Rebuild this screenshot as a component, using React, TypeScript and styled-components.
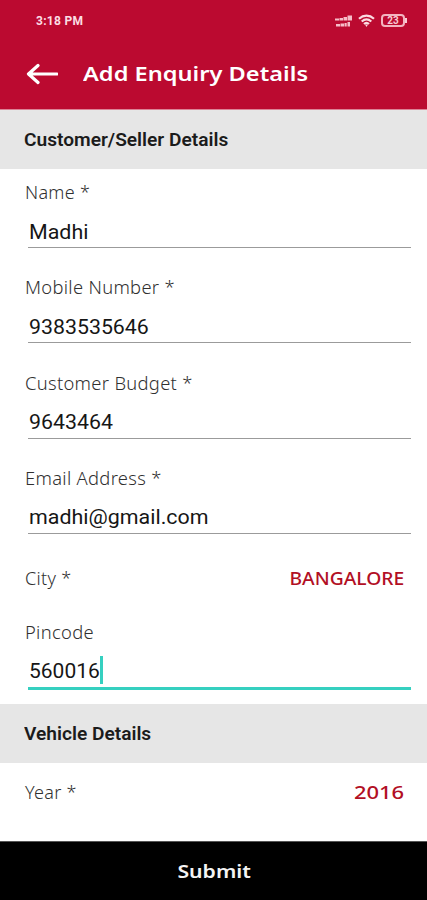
import React from "react";
import styled, { createGlobalStyle } from "styled-components";

const GlobalStyle = createGlobalStyle`
  * { box-sizing: border-box; }
  body { margin: 0; background: #fff; }
`;

const Screen = styled.div`
  width: 100%;
  height: 900px;
  display: flex;
  flex-direction: column;
  overflow: hidden;
  background: #fff;
  color: #202020;
  font-family: Roboto, sans-serif;
`;

const Header = styled.header`
  flex: none;
  height: 110px;
  background: #bb0a30;
  border-bottom: 1px solid #dc8396;
  color: #fff;
`;

const StatusBar = styled.div`
  height: 41px;
  padding: 0 19px 0 36px;
  display: flex;
  align-items: center;
  justify-content: space-between;
`;

const Clock = styled.span`
  font: 700 12px/16px Roboto, sans-serif;
  letter-spacing: 0.3px;
  color: #fbdde3;
`;

const StatusIcons = styled.div`
  display: flex;
  align-items: center;
  gap: 6px;
  svg { display: block; }
`;

const AppBar = styled.div`
  height: 66px;
  padding-left: 26px;
  display: flex;
  align-items: center;
  gap: 25px;
`;

const BackButton = styled.button`
  width: 32px;
  height: 24px;
  padding: 0;
  border: 0;
  background: none;
  color: #fff;
  svg { display: block; }
`;

const Stretch = styled.span<{ $x?: number; $origin?: string }>`
  display: inline-block;
  white-space: nowrap;
  transform: scaleX(${(p) => p.$x ?? 1});
  transform-origin: ${(p) => p.$origin ?? "left"} center;
`;

const Title = styled.h1`
  margin: 0;
  font: 600 20px/28px "Noto Sans", sans-serif;
`;

const SectionHeading = styled.h2`
  flex: none;
  margin: 0;
  height: 59px;
  padding: 1px 24px 0;
  display: flex;
  align-items: center;
  background: #e6e6e6;
  color: #1b1b1b;
  font: 600 18px/24px Roboto, sans-serif;
`;

const Field = styled.div<{ $last?: boolean }>`
  flex: none;
  height: ${(p) => (p.$last ? 102 : 95.2)}px;
  padding: ${(p) => (p.$last ? 17 : 10.2)}px 16px 0 25px;
`;

const Label = styled.label`
  display: block;
  height: 26px;
  white-space: nowrap;
  color: #303030;
  font: 350 18px/26px "Noto Sans", sans-serif;
  letter-spacing: 0.3px;
`;

const ValueLine = styled.div<{ $focused?: boolean }>`
  height: ${(p) => (p.$focused ? 45 : 43)}px;
  margin-left: 3px;
  padding: ${(p) => (p.$focused ? 12 : 12.6)}px 0 0 1px;
  display: flex;
  align-items: flex-start;
  border-bottom: ${(p) => (p.$focused ? "3px solid #35d0c0" : "1px solid #9b9b9b")};
  color: #161616;
  font: 370 21px/28px Roboto, sans-serif;
`;

const Caret = styled.i`
  width: 3px;
  height: 28px;
  margin-top: -1px;
  background: #35d0c0;
`;

const PickerRow = styled.div<{ $height: number; $shift?: number }>`
  flex: none;
  height: ${(p) => p.$height}px;
  padding: ${(p) => p.$shift ?? 0}px 23px 0 25px;
  display: flex;
  align-items: center;
  justify-content: space-between;
`;

const PickerValue = styled.span`
  color: #b20f24;
  font: 550 18px/26px "Noto Sans", sans-serif;
`;

const Submit = styled.button`
  flex: none;
  height: 59px;
  margin-top: auto;
  padding: 0 0 1px 2px;
  border: 0;
  border-top: 1px solid #555;
  background: #000;
  color: #f4f4f4;
  font: 600 18px/26px "Noto Sans", sans-serif;
`;

const SignalIcon = () => (
  <svg width="17" height="14" viewBox="0 0 17 14" fill="#f6bdc8">
    <path d="M0 4.500h4v2H0zM4.500 4H8v2.500H4.500zM8.500 3H12v3.500H8.500zM12.500 1.500H17v5h-4.500zM1 10h4v2.500H1zM5.500 9.500H9v3H5.500zM9.500 9h2.200v3.500H9.500zM12.500 8h2.500v4.500h-2.500z" />
  </svg>
);

const WifiIcon = () => (
  <svg width="17" height="14" viewBox="0 0 17 14" fill="none" stroke="#fbdce2" strokeWidth="2.200">
    <path d="M1 4.700c4.500-4 10.500-4 15 0M3.700 7.500c3-2.600 6.600-2.600 9.600 0M6 10c1.500-1.400 3.500-1.400 5 0" />
    <path d="M7 10.500h3L8.500 13z" fill="#fbdce2" stroke="none" />
  </svg>
);

const BatteryShell = styled.span`
  position: relative;
  width: 24px;
  height: 13px;
  margin: 0 3px 0 0;
  border: 2px solid #f3b4c0;
  border-radius: 4px;
  display: flex;
  align-items: center;
  justify-content: center;
  color: #f8ccd5;
  font: 700 10px/10px Roboto, sans-serif;
  &::after {
    content: "";
    position: absolute;
    right: -4px;
    top: 2px;
    width: 2px;
    height: 5px;
    background: #f8ccd5;
  }
`;

type EntryProps = { label: string; value: string; stretch?: number; focused?: boolean; labelStretch?: number };

const Entry = ({ label, value, stretch, focused, labelStretch }: EntryProps) => (
  <Field $last={focused}>
    <Label>
      <Stretch $x={labelStretch}>{label}</Stretch>
    </Label>
    <ValueLine $focused={focused}>
      <Stretch $x={stretch}>{value}</Stretch>
      {focused && <Caret />}
    </ValueLine>
  </Field>
);

export default function App() {
  return (
    <>
      <GlobalStyle />
      <Screen>
        <Header>
          <StatusBar>
            <Clock>3:18 PM</Clock>
            <StatusIcons>
              <SignalIcon />
              <WifiIcon />
              <BatteryShell>23</BatteryShell>
            </StatusIcons>
          </StatusBar>
          <AppBar>
            <BackButton aria-label="Back">
              <svg width="32" height="24" viewBox="0 0 32 24" fill="none" stroke="currentColor" strokeWidth="3.200">
                <path d="M31 12H3M12 3.500 2.500 12l9.500 8.500" strokeLinejoin="round" strokeLinecap="round" />
              </svg>
            </BackButton>
            <Title>
              <Stretch $x={1.18}>Add Enquiry Details</Stretch>
            </Title>
          </AppBar>
        </Header>
        <SectionHeading>
          <Stretch $x={1.063}>Customer/Seller Details</Stretch>
        </SectionHeading>
        <Entry label="Name *" value="Madhi" stretch={1.02} />
        <Entry label="Mobile Number *" value="9383535646" stretch={1.015} labelStretch={1.02} />
        <Entry label="Customer Budget *" value="9643464" stretch={1.015} labelStretch={1.02} />
        <Entry label="Email Address *" value="madhi@gmail.com" stretch={1.02} labelStretch={1.02} />
        <PickerRow $height={52} $shift={4}>
          <Label>City *</Label>
          <PickerValue>
            <Stretch $x={1.07} $origin="right">BANGALORE</Stretch>
          </PickerValue>
        </PickerRow>
        <Entry label="Pincode" value="560016" labelStretch={1.02} focused />
        <SectionHeading>
          <Stretch $x={1.063}>Vehicle Details</Stretch>
        </SectionHeading>
        <PickerRow $height={58}>
          <Label>Year *</Label>
          <PickerValue>
            <Stretch $x={1.22} $origin="right">2016</Stretch>
          </PickerValue>
        </PickerRow>
        <Submit>
          <Stretch $x={1.18} $origin="center">Submit</Stretch>
        </Submit>
      </Screen>
    </>
  );
}
